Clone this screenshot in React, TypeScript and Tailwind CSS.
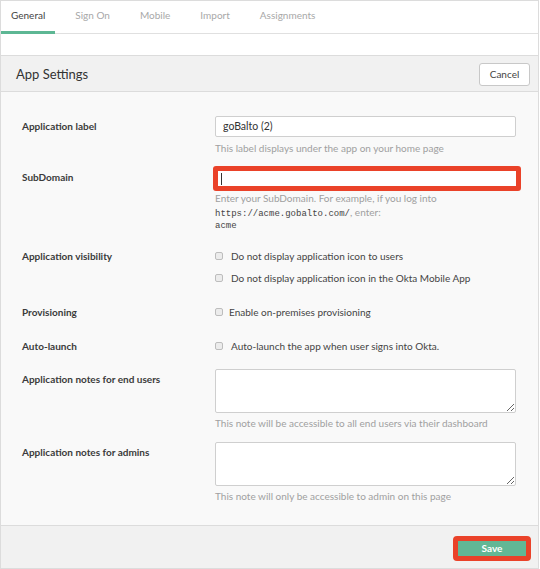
import React from "react";

const font = { fontFamily: "Lato, 'Open Sans', sans-serif" };
const mono = { fontFamily: "'Liberation Mono', monospace" };

function Checkbox() {
  return <span className="inline-block w-[8px] h-[8px] border border-[#bdbdbd] rounded-[2px] bg-[#ececec] shrink-0" />;
}

function Label({ children, lh = "leading-[21px]" }: { children: React.ReactNode; lh?: string }) {
  return <div className={`w-[214px] pl-[21px] shrink-0 text-[10px] font-bold text-[#3b3b3b] ${lh}`}>{children}</div>;
}

function Hint({ children, className = "" }: { children: React.ReactNode; className?: string }) {
  return <div className={`h-[14px] text-[10px] leading-[14px] text-[#a0a0a0] ${className}`}>{children}</div>;
}

export default function App() {
  const tabs = ["General", "Sign On", "Mobile", "Import", "Assignments"];
  return (
    <div className="w-[539px] h-[569px] bg-white border-x border-t border-[#dcdcdc] flex flex-col" style={font}>
      <div className="flex h-[33px] shrink-0 border-b border-[#e0e0e0] gap-[10px]">
        {tabs.map((t, i) => (
          <div
            key={t}
            className={
              i === 0
                ? "px-[10px] h-[33px] -mb-px flex items-center text-[10px] text-[#444] border-b-[3px] border-[#5db794] pb-[1px]"
                : "px-[10px] h-[32px] flex items-center text-[10px] text-[#a8a8a8] pb-[3px]"
            }
          >
            {t}
          </div>
        ))}
      </div>
      <div className="h-[21px] shrink-0" />
      <div className="flex-1 flex flex-col border-t border-[#dcdcdc] border-b">
        <div className="h-[36px] shrink-0 bg-[#f1f1f1] border-b border-[#dcdcdc] flex justify-between pl-[15px] pr-[8px] pt-[7px]">
          <div className="text-[13px] text-[#333] leading-[23px]">App Settings</div>
          <div className="w-[51px] h-[23px] bg-white border border-[#c8c8c8] rounded-[3px] flex items-center justify-center text-[10px] text-[#444]">
            Cancel
          </div>
        </div>
        <div className="bg-[#f9f9f9] pt-[24px] pb-[22px] flex flex-col shrink-0">
          <div className="flex">
            <Label>Application label</Label>
            <div className="w-[301px]">
              <div className="h-[21px] bg-white border border-[#cfcfcf] rounded-[2px] px-[7px] text-[10.5px] leading-[19px] text-[#333]">goBalto (2)</div>
              <Hint className="mt-[4px]">This label displays under the app on your home page</Hint>
            </div>
          </div>
          <div className="flex mt-[11px]">
            <Label lh="leading-[23px]">SubDomain</Label>
            <div className="w-[301px]">
              <div className="-ml-[2px] w-[308px] h-[25px] border-[5px] border-[#ea4229] rounded-[3px] bg-white flex items-center pl-[3px]">
                <span className="w-[1px] h-[12px] bg-[#333]" />
              </div>
              <Hint>Enter your SubDomain. For example, if you log into</Hint>
              <div className="h-[14px] flex items-baseline text-[10px] leading-[14px] text-[#a0a0a0]">
                <span className="text-[#444] text-[9px] leading-[14px]" style={mono}>https://acme.gobalto.com/</span>
                <span>, enter:</span>
              </div>
              <div className="h-[14px] text-[9px] leading-[14px] text-[#444]" style={mono}>acme</div>
            </div>
          </div>
          <div className="flex mt-[12px]">
            <Label lh="leading-[22px]">Application visibility</Label>
            <div className="w-[301px] flex flex-col">
              <div className="h-[22px] flex items-center gap-[8px] text-[10px] text-[#444]"><Checkbox />Do not display application icon to users</div>
              <div className="h-[22px] flex items-center gap-[8px] text-[10px] text-[#444]"><Checkbox />Do not display application icon in the Okta Mobile App</div>
            </div>
          </div>
          <div className="flex mt-[12px]">
            <Label lh="leading-[22px]">Provisioning</Label>
            <div className="w-[301px] h-[22px] flex items-center gap-[6px] text-[10px] text-[#444]"><Checkbox />Enable on-premises provisioning</div>
          </div>
          <div className="flex mt-[12px]">
            <Label lh="leading-[22px]">Auto-launch</Label>
            <div className="w-[301px] h-[22px] flex items-center gap-[8px] text-[10px] text-[#444]"><Checkbox />Auto-launch the app when user signs into Okta.</div>
          </div>
          <div className="flex mt-[12px]">
            <Label>Application notes for end users</Label>
            <div className="w-[301px]">
              <textarea className="block w-[301px] h-[44px] bg-white border border-[#cfcfcf] rounded-[2px]" />
              <Hint className="mt-[3px]">This note will be accessible to all end users via their dashboard</Hint>
            </div>
          </div>
          <div className="flex mt-[12px]">
            <Label>Application notes for admins</Label>
            <div className="w-[301px]">
              <textarea className="block w-[301px] h-[44px] bg-white border border-[#cfcfcf] rounded-[2px]" />
              <Hint className="mt-[3px]">This note will only be accessible to admin on this page</Hint>
            </div>
          </div>
        </div>
        <div className="flex-1 bg-[#f1f1f1] border-t border-[#dcdcdc] flex justify-end items-start pt-[10px] pr-[7px]">
          <div className="w-[78px] h-[25px] border-[5px] border-[#ea4229] rounded-[4px] bg-[#62b795] flex items-center justify-center text-[10px] font-bold text-white">
            Save
          </div>
        </div>
      </div>
    </div>
  );
}
